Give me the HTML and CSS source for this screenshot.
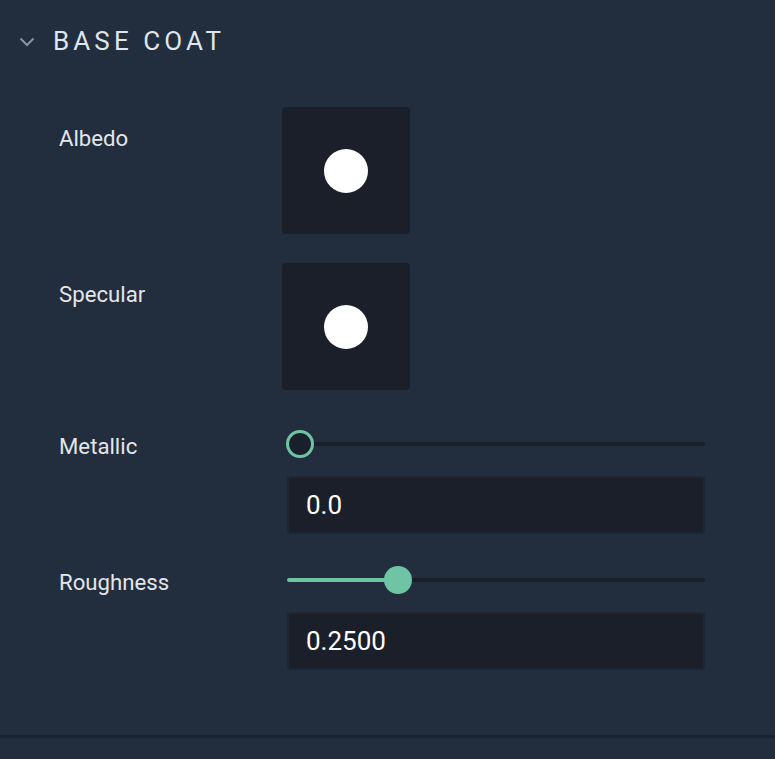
FILE: index.html
```html
<!DOCTYPE html>
<html>
<head>
<meta charset="utf-8">
<link rel="stylesheet" href="styles.css">
</head>
<body>
<div class="panel">
  <div class="header">
    <svg class="chevron" width="16" height="10" viewBox="0 0 16 10"><path d="M1.5 1.5 L8 8 L14.5 1.5" fill="none" stroke="#8b929c" stroke-width="2"/></svg>
    <span class="title">BASE COAT</span>
  </div>
  <div class="rows">
    <div class="row row-swatch">
      <div class="label label-swatch">Albedo</div>
      <div class="swatch"><span class="dot"></span></div>
    </div>
    <div class="row row-swatch row-gap1">
      <div class="label label-swatch">Specular</div>
      <div class="swatch"><span class="dot"></span></div>
    </div>
    <div class="row row-gap2">
      <div class="label label-slider">Metallic</div>
      <div class="control">
        <div class="slider">
          <div class="track"></div>
          <div class="thumb hollow" style="left: -1px"></div>
        </div>
        <div class="field">0.0</div>
      </div>
    </div>
    <div class="row row-gap3">
      <div class="label label-slider">Roughness</div>
      <div class="control">
        <div class="slider">
          <div class="track"><div class="fill" style="width: 111px"></div></div>
          <div class="thumb solid" style="left: 97px"></div>
        </div>
        <div class="field">0.2500</div>
      </div>
    </div>
  </div>
  <div class="divider"></div>
</div>
</body>
</html>
```

FILE: styles.css
```css
html, body {
  margin: 0;
  padding: 0;
  background: #222d3d;
}
body {
  font-family: Roboto, "Liberation Sans", sans-serif;
  width: 775px;
  height: 759px;
  overflow: hidden;
}
.panel {
  display: flex;
  flex-direction: column;
}
.header {
  height: 82px;
  display: flex;
  align-items: center;
  padding-left: 19px;
}
.chevron {
  display: block;
  margin-right: 18px;
  margin-top: 1px;
}
.title {
  font-size: 26px;
  letter-spacing: 4.1px;
  color: #dfe5ed;
  line-height: 30px;
}
.rows {
  padding-top: 25px;
  display: flex;
  flex-direction: column;
}
.row {
  display: grid;
  grid-template-columns: 223px 428px;
  padding-left: 59px;
}
.row-gap1 { margin-top: 29px; }
.row-gap2 { margin-top: 40px; }
.row-gap3 { margin-top: 32px; }
.label {
  font-size: 22.2px;
  color: #e3e6ea;
}
.label-swatch {
  line-height: 26px;
  padding-top: 18px;
}
.label-slider {
  line-height: 28px;
  height: 28px;
  padding-top: 2px;
}
.swatch {
  width: 128px;
  height: 127px;
  background: #1a1f29;
  border-radius: 4px;
  display: flex;
  align-items: center;
  justify-content: center;
}
.dot {
  width: 44px;
  height: 44px;
  border-radius: 50%;
  background: #ffffff;
  margin-top: 1px;
}
.control {
  display: flex;
  flex-direction: column;
  gap: 18px;
  padding-left: 5px;
  width: 418px;
}
.slider {
  position: relative;
  height: 28px;
  display: flex;
  align-items: center;
}
.track {
  width: 100%;
  height: 4px;
  border-radius: 2px;
  background: #191f29;
  overflow: hidden;
}
.fill {
  height: 100%;
  background: #6ec4a4;
}
.thumb {
  position: absolute;
  top: 0;
  width: 28px;
  height: 28px;
  border-radius: 50%;
  box-sizing: border-box;
}
.thumb.hollow {
  border: 3.5px solid #6ec4a4;
  background: #1a202b;
}
.thumb.solid {
  background: #6ec4a4;
}
.field {
  height: 58px;
  box-sizing: border-box;
  background: #1a1f29;
  border: 2px solid #1e2634;
  font-size: 26px;
  color: #ffffff;
  line-height: 54px;
  padding-left: 17px;
}
.divider {
  margin-top: 65px;
  height: 3px;
  background: #1b2433;
}
```
